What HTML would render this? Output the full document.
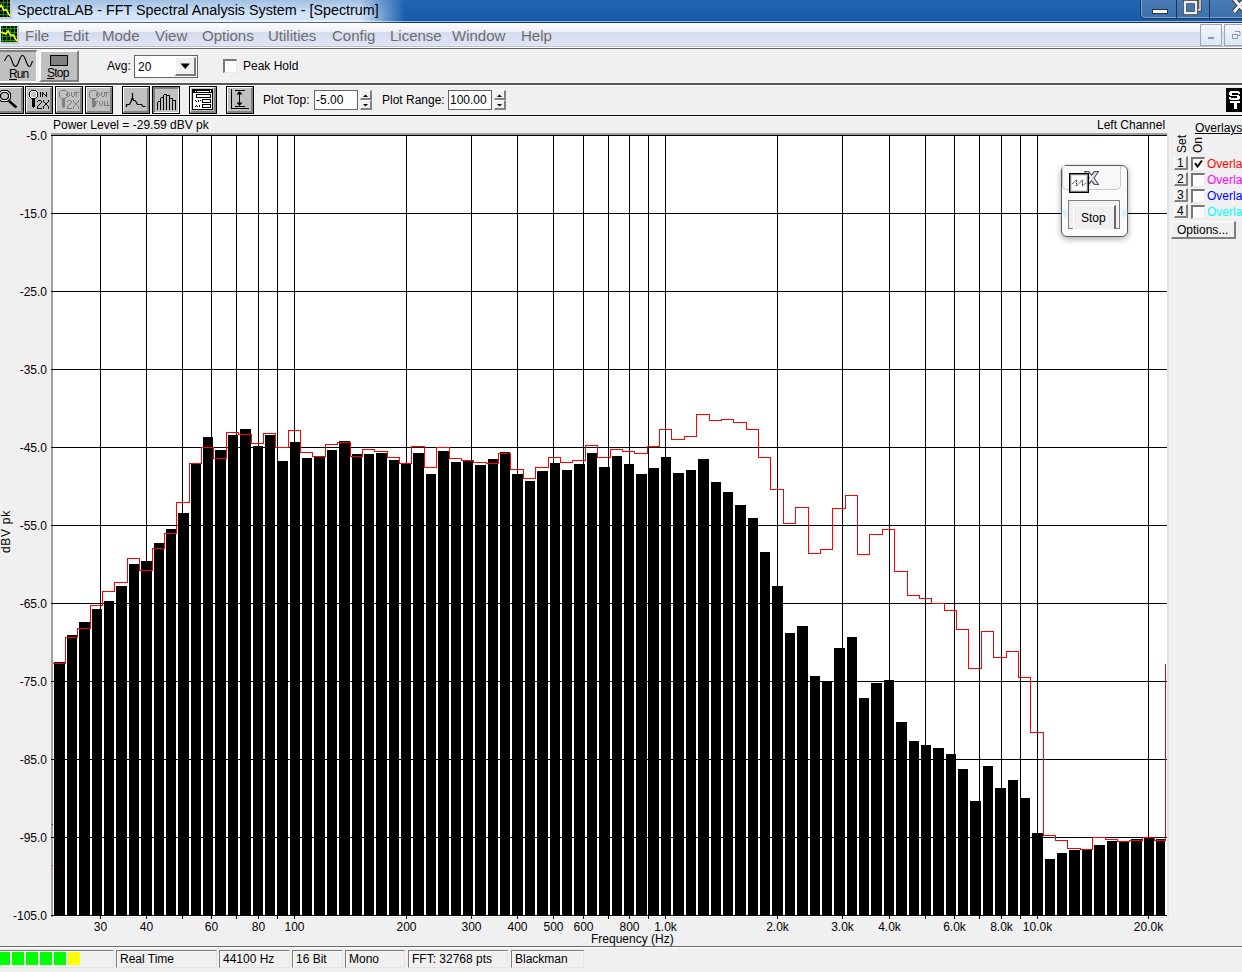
<!DOCTYPE html>
<html><head><meta charset="utf-8"><style>
*{margin:0;padding:0;box-sizing:border-box}
html,body{width:1242px;height:972px;overflow:hidden;background:#f0f0f0;font-family:"Liberation Sans",sans-serif;position:relative}
.a{position:absolute}
.t{position:absolute;white-space:nowrap;line-height:1}
</style></head><body>
<div class="a" style="left:0;top:0;width:1242px;height:20px;background:linear-gradient(#2066b4,#175cab)"></div><div class="a" style="left:0;top:20px;width:1242px;height:1px;background:#0c56a8"></div><div class="a" style="left:0;top:21px;width:1242px;height:1px;background:#9bbde0"></div><div class="a" style="left:0;top:22px;width:1242px;height:1px;background:#1b3050"></div><div class="a" style="left:0;top:0;width:410px;height:22px;-webkit-mask-image:linear-gradient(to right,#000 0,#000 360px,transparent 405px);mask-image:linear-gradient(to right,#000 0,#000 360px,transparent 405px);background:linear-gradient(#a2c0e4 0px,#bcd5ef 8px,#d4e6f8 14px,#cfe3f7 20px,#e6f2fb 20px,#e6f2fb 21px)"></div><div class="a" style="left:0;top:22px;width:410px;height:1px;-webkit-mask-image:linear-gradient(to right,#000 0,#000 360px,transparent 405px);background:#5a6878"></div><div class="t" style="left:17px;top:3px;font-size:14.32px;color:#000;">SpectraLAB - FFT Spectral Analysis System - [Spectrum]</div><svg class="a" style="left:-6px;top:0px" width="18" height="19" viewBox="0 0 18 19"><rect x="0" y="0" width="18" height="19" fill="#c8c8c8"/><rect x="0" y="0" width="16" height="17" fill="#000"/><rect x="1" y="0" width="1" height="17" fill="#00a000"/><rect x="5" y="0" width="1" height="17" fill="#00a000"/><rect x="9" y="0" width="1" height="17" fill="#00a000"/><rect x="13" y="0" width="1" height="17" fill="#00a000"/><rect x="0" y="2" width="16" height="1" fill="#00a000"/><rect x="0" y="6" width="16" height="1" fill="#00a000"/><rect x="0" y="10" width="16" height="1" fill="#00a000"/><rect x="0" y="14" width="16" height="1" fill="#00a000"/><polyline points="0,6.46 4.8,8.5 7.2,5.1 9.6,10.2 12.0,9.350000000000001 16,16.15" stroke="#ff0" stroke-width="1.6" fill="none"/></svg><div class="a" style="left:1140px;top:-2px;width:110px;height:21px;border:1px solid #1d3554;border-radius:0 0 0 5px;background:linear-gradient(#4a7bb5,#3d6fab);box-shadow:inset 0 0 0 1px #7da3cf"></div><div class="a" style="left:1176px;top:0;width:1px;height:18px;background:#1d3554"></div><div class="a" style="left:1209px;top:0;width:1px;height:18px;background:#1d3554"></div><div class="a" style="left:1152px;top:9px;width:16px;height:5px;background:#f4f4f4;border:1px solid #333"></div><svg class="a" style="left:1183px;top:-2px" width="19" height="17"><path d="M5 1h12v11h-3" fill="none" stroke="#333" stroke-width="3"/><path d="M5 1h12v11h-3" fill="none" stroke="#eee" stroke-width="1.5"/><rect x="2" y="4" width="11" height="11" fill="none" stroke="#333" stroke-width="4"/><rect x="2" y="4" width="11" height="11" fill="none" stroke="#eee" stroke-width="2.5"/></svg><svg class="a" style="left:1232px;top:-3px" width="14" height="17"><path d="M2 2L13 15M13 2L2 15" stroke="#333" stroke-width="5"/><path d="M2 2L13 15M13 2L2 15" stroke="#f2f2f2" stroke-width="3"/></svg><div class="a" style="left:0;top:23px;width:1242px;height:23px;background:linear-gradient(#fcfdfe 0px,#eef0f8 9px,#d5dcee 9px,#dfe5f5 23px)"></div><div class="a" style="left:0;top:46px;width:1242px;height:1px;background:#b9c2d6"></div><div class="a" style="left:0;top:47px;width:1242px;height:1px;background:#ffffff"></div><div class="a" style="left:0;top:48px;width:1242px;height:1px;background:#666"></div><svg class="a" style="left:1px;top:26px" width="18" height="18" viewBox="0 0 18 18"><rect x="0" y="0" width="18" height="18" fill="#c8c8c8"/><rect x="0" y="0" width="16" height="16" fill="#000"/><rect x="1" y="0" width="1" height="16" fill="#00a000"/><rect x="5" y="0" width="1" height="16" fill="#00a000"/><rect x="9" y="0" width="1" height="16" fill="#00a000"/><rect x="13" y="0" width="1" height="16" fill="#00a000"/><rect x="0" y="2" width="16" height="1" fill="#00a000"/><rect x="0" y="6" width="16" height="1" fill="#00a000"/><rect x="0" y="10" width="16" height="1" fill="#00a000"/><rect x="0" y="14" width="16" height="1" fill="#00a000"/><polyline points="0,6.08 4.8,8.0 7.2,4.8 9.6,9.6 12.0,8.8 16,15.2" stroke="#ff0" stroke-width="1.6" fill="none"/></svg><div class="t" style="left:25px;top:28px;font-size:15px;color:#6d6d6d;">File</div><div class="t" style="left:63px;top:28px;font-size:15px;color:#6d6d6d;">Edit</div><div class="t" style="left:102px;top:28px;font-size:15px;color:#6d6d6d;">Mode</div><div class="t" style="left:155px;top:28px;font-size:15px;color:#6d6d6d;">View</div><div class="t" style="left:202px;top:28px;font-size:15px;color:#6d6d6d;">Options</div><div class="t" style="left:268px;top:28px;font-size:15px;color:#6d6d6d;">Utilities</div><div class="t" style="left:332px;top:28px;font-size:15px;color:#6d6d6d;">Config</div><div class="t" style="left:390px;top:28px;font-size:15px;color:#6d6d6d;">License</div><div class="t" style="left:452px;top:28px;font-size:15px;color:#6d6d6d;">Window</div><div class="t" style="left:521px;top:28px;font-size:15px;color:#6d6d6d;">Help</div><div class="a" style="left:1200px;top:24px;width:22px;height:22px;border:1px solid #9aa6b8;background:linear-gradient(#f2f6fc,#dce8f6)"></div><div class="a" style="left:1208px;top:37px;width:6px;height:2px;background:#8a94a4"></div><div class="a" style="left:1224px;top:24px;width:22px;height:22px;border:1px solid #9aa6b8;background:linear-gradient(#f2f6fc,#dce8f6)"></div><svg class="a" style="left:1232px;top:31px" width="9" height="9"><path d="M3 .5h5v4h-2M.5 3.5h5v4h-5z" fill="none" stroke="#8a94a4"/></svg>
<!--TOOLBAR-->
<svg class="a" style="left:0;top:0" width="1242" height="972" viewBox="0 0 1242 972" shape-rendering="crispEdges">
<rect x="51" y="133" width="2" height="784" fill="#a0a0a0"/>
<rect x="51" y="133" width="1116" height="2" fill="#a0a0a0"/>
<rect x="53" y="136" width="1114" height="781" fill="#fff"/>
<rect x="1167" y="134" width="2" height="784" fill="#e3e3e3"/>
<rect x="51" y="917" width="1118" height="1" fill="#e3e3e3"/>
<path d="M100.5 135V916 M146.5 135V916 M182.5 135V916 M211.5 135V916 M236.5 135V916 M258.5 135V916 M277.5 135V916 M294.5 135V916 M406.5 135V916 M471.5 135V916 M517.5 135V916 M553.5 135V916 M583.5 135V916 M608.5 135V916 M629.5 135V916 M648.5 135V916 M665.5 135V916 M777.5 135V916 M842.5 135V916 M889.5 135V916 M925.5 135V916 M954.5 135V916 M979.5 135V916 M1001.5 135V916 M1020.5 135V916 M1037.5 135V916 M1148.5 135V916 M51 135.5H1167 M51 213.5H1167 M51 291.5H1167 M51 369.5H1167 M51 447.5H1167 M51 525.5H1167 M51 603.5H1167 M51 681.5H1167 M51 759.5H1167 M51 837.5H1167 M51 915.5H1167" stroke="#000" stroke-width="1" fill="none"/>
<path d="M100.5 916V919 M146.5 916V919 M182.5 916V919 M211.5 916V919 M236.5 916V919 M258.5 916V919 M277.5 916V919 M294.5 916V919 M406.5 916V919 M471.5 916V919 M517.5 916V919 M553.5 916V919 M583.5 916V919 M608.5 916V919 M629.5 916V919 M648.5 916V919 M665.5 916V919 M777.5 916V919 M842.5 916V919 M889.5 916V919 M925.5 916V919 M954.5 916V919 M979.5 916V919 M1001.5 916V919 M1020.5 916V919 M1037.5 916V919 M1148.5 916V919" stroke="#000" stroke-width="1" fill="none"/>
<path d="M54 662H65V915H54Z M67 635H77V915H67Z M79 622H90V915H79Z M92 609H102V915H92Z M104 601H114V915H104Z M116 586H127V915H116Z M129 564H139V915H129Z M141 561H152V915H141Z M154 543H164V915H154Z M166 529H176V915H166Z M178 513H189V915H178Z M191 464H201V915H191Z M203 437H213V915H203Z M215 450H226V915H215Z M228 435H238V915H228Z M240 429H251V915H240Z M253 446H263V915H253Z M265 435H275V915H265Z M277 461H288V915H277Z M290 442H300V915H290Z M302 458H312V915H302Z M314 457H325V915H314Z M327 450H337V915H327Z M339 441H350V915H339Z M352 454H362V915H352Z M364 454H374V915H364Z M376 453H387V915H376Z M389 460H399V915H389Z M401 464H411V915H401Z M413 453H424V915H413Z M426 474H436V915H426Z M438 451H449V915H438Z M451 462H461V915H451Z M463 461H473V915H463Z M475 465H486V915H475Z M488 459H498V915H488Z M500 452H510V915H500Z M512 474H523V915H512Z M525 481H535V915H525Z M537 471H548V915H537Z M550 463H560V915H550Z M562 470H572V915H562Z M574 464H585V915H574Z M587 453H597V915H587Z M599 467H610V915H599Z M612 456H622V915H612Z M624 464H634V915H624Z M636 474H647V915H636Z M649 468H659V915H649Z M661 457H671V915H661Z M673 473H684V915H673Z M686 470H696V915H686Z M698 459H709V915H698Z M711 482H721V915H711Z M723 492H733V915H723Z M735 505H746V915H735Z M748 518H758V915H748Z M760 552H770V915H760Z M772 586H783V915H772Z M785 633H795V915H785Z M797 626H808V915H797Z M810 676H820V915H810Z M822 681H832V915H822Z M834 648H845V915H834Z M847 637H857V915H847Z M859 698H869V915H859Z M871 683H882V915H871Z M884 680H894V915H884Z M896 722H907V915H896Z M909 741H919V915H909Z M921 745H931V915H921Z M933 748H944V915H933Z M946 754H956V915H946Z M958 769H968V915H958Z M970 801H981V915H970Z M983 766H993V915H983Z M995 788H1006V915H995Z M1008 780H1018V915H1008Z M1020 798H1030V915H1020Z M1032 833H1043V915H1032Z M1045 859H1055V915H1045Z M1057 853H1067V915H1057Z M1069 850H1080V915H1069Z M1082 850H1092V915H1082Z M1094 845H1105V915H1094Z M1107 841H1117V915H1107Z M1119 841H1129V915H1119Z M1131 839H1142V915H1131Z M1144 838H1154V915H1144Z M1156 839H1165V915H1156Z" fill="#000"/>
<path d="M53 663.5H65.5V637.5H77.5V628.5H90.5V605.5H102.5V591.5H114.5V582.5H127.5V558.5H139.5V570.5H152.5V548.5H164.5V533.5H176.5V502.5H189.5V463.5H201.5V447.5H213.5V458.5H226.5V432.5H238.5V434.5H251.5V443.5H263.5V433.5H275.5V447.5H288.5V430.5H300.5V452.5H312.5V456.5H325.5V444.5H337.5V442.5H350.5V456.5H362.5V449.5H374.5V451.5H387.5V457.5H399.5V463.5H411.5V446.5H424.5V467.5H436.5V447.5H449.5V458.5H461.5V460.5H473.5V462.5H486.5V463.5H498.5V453.5H510.5V469.5H523.5V478.5H535.5V467.5H548.5V457.5H560.5V462.5H572.5V460.5H585.5V445.5H597.5V457.5H610.5V449.5H622.5V451.5H634.5V453.5H647.5V446.5H659.5V429.5H671.5V439.5H684.5V436.5H696.5V414.5H709.5V420.5H721.5V419.5H733.5V422.5H746.5V429.5H758.5V457.5H770.5V489.5H783.5V523.5H795.5V507.5H808.5V553.5H820.5V549.5H832.5V508.5H845.5V495.5H857.5V554.5H869.5V534.5H882.5V529.5H894.5V571.5H907.5V595.5H919.5V598.5H931.5V603.5H944.5V610.5H956.5V629.5H968.5V668.5H981.5V631.5H993.5V657.5H1006.5V651.5H1018.5V677.5H1030.5V732.5H1043.5V835.5H1055.5V840.5H1067.5V848.5H1080.5V849.5H1092.5V837.5H1105.5V839.5H1117.5V841.5H1129.5V840.5H1142.5V837.5H1154.5V840.5H1165.5V664" stroke="#f00" stroke-width="1" fill="none"/>
<rect x="52" y="824" width="1" height="1" fill="#0000ff"/><rect x="52" y="865" width="1" height="1" fill="#ff0000"/>
</svg>
<div class="a" style="left:-2px;top:50px;width:39px;height:32px;background:#c0c0c0;border-top:2px solid #808080;border-left:2px solid #808080;border-right:1px solid #fff;border-bottom:1px solid #fff"></div><svg class="a" style="left:3px;top:53px" width="32" height="16"><path d="M1.5 8C3 5 4 2.5 5.5 2.5S8 5 9 8S11 13.5 12.5 13.5S15 11 16 8S18 2.5 19.5 2.5S22 5 23 8S25 13.5 26.5 13.5S28.5 10.5 29.5 8" fill="none" stroke="#000" stroke-width="1.1"/></svg><div class="t" style="left:9px;top:68px;font-size:12px;color:#000;letter-spacing:-0.9px"><u>R</u>un</div><div class="a" style="left:39px;top:50px;width:40px;height:32px;background:#c0c0c0;border-top:2px solid #fff;border-left:2px solid #fff;border-right:2px solid #808080;border-bottom:2px solid #808080"></div><div class="a" style="left:50px;top:55px;width:18px;height:11px;background:#808080;border:1px solid #000"></div><div class="t" style="left:47px;top:67px;font-size:12px;color:#000;letter-spacing:-0.8px"><u>S</u>top</div><div class="a" style="left:0;top:82px;width:1242px;height:1px;background:#f8f8f8"></div><div class="a" style="left:0;top:83px;width:1242px;height:2px;background:#555"></div><div class="a" style="left:0;top:85px;width:1242px;height:1px;background:#fff"></div><div class="t" style="left:107px;top:60px;font-size:12px;color:#000;">Avg:</div><div class="a" style="left:134px;top:55px;width:64px;height:23px;border:1px solid #646464;background:#fff"></div><div class="t" style="left:138px;top:61px;font-size:12px;color:#000;">20</div><div class="a" style="left:175px;top:57px;width:21px;height:19px;background:#f0f0f0;border-top:1px solid #fff;border-left:1px solid #fff;border-right:2px solid #7a7a7a;border-bottom:2px solid #7a7a7a"></div><svg class="a" style="left:180px;top:63px" width="11" height="7"><path d="M0.5 0.5H10L5.25 6Z" fill="#000"/></svg><div class="a" style="left:223px;top:59px;width:14px;height:14px;background:#fff;border-top:2px solid #777;border-left:2px solid #777;border-right:1px solid #e8e8e8;border-bottom:1px solid #e8e8e8"></div><div class="t" style="left:243px;top:60px;font-size:12px;color:#000;">Peak Hold</div><div class="a" style="left:-4px;top:86px;width:28px;height:28px;border:1px solid #000;background:#c0c0c0"><div class="a" style="left:0;top:0;width:26px;height:26px;border-top:1px solid #fff;border-left:1px solid #fff;border-right:2px solid #808080;border-bottom:2px solid #808080"></div></div><div class="a" style="left:25px;top:86px;width:28px;height:28px;border:1px solid #000;background:#c0c0c0"><div class="a" style="left:0;top:0;width:26px;height:26px;border-top:1px solid #fff;border-left:1px solid #fff;border-right:2px solid #808080;border-bottom:2px solid #808080"></div></div><div class="a" style="left:55px;top:86px;width:28px;height:28px;border:1px solid #000;background:#c0c0c0"><div class="a" style="left:0;top:0;width:26px;height:26px;border-top:1px solid #fff;border-left:1px solid #fff;border-right:2px solid #808080;border-bottom:2px solid #808080"></div></div><div class="a" style="left:85px;top:86px;width:28px;height:28px;border:1px solid #000;background:#c0c0c0"><div class="a" style="left:0;top:0;width:26px;height:26px;border-top:1px solid #fff;border-left:1px solid #fff;border-right:2px solid #808080;border-bottom:2px solid #808080"></div></div><div class="a" style="left:122px;top:86px;width:28px;height:28px;border:1px solid #000;background:#c0c0c0"><div class="a" style="left:0;top:0;width:26px;height:26px;border-top:1px solid #fff;border-left:1px solid #fff;border-right:2px solid #808080;border-bottom:2px solid #808080"></div></div><div class="a" style="left:152px;top:86px;width:28px;height:28px;border:1px solid #000;background:#c0c0c0"><div class="a" style="left:0;top:0;width:26px;height:26px;border-top:2px solid #808080;border-left:2px solid #808080;border-right:1px solid #fff;border-bottom:1px solid #fff"></div></div><div class="a" style="left:189px;top:86px;width:28px;height:28px;border:1px solid #000;background:#c0c0c0"><div class="a" style="left:0;top:0;width:26px;height:26px;border-top:1px solid #fff;border-left:1px solid #fff;border-right:2px solid #808080;border-bottom:2px solid #808080"></div></div><div class="a" style="left:226px;top:86px;width:28px;height:28px;border:1px solid #000;background:#c0c0c0"><div class="a" style="left:0;top:0;width:26px;height:26px;border-top:1px solid #fff;border-left:1px solid #fff;border-right:2px solid #808080;border-bottom:2px solid #808080"></div></div><div class="a" style="left:0;top:114px;width:1242px;height:1px;background:#fff"></div><div class="a" style="left:0;top:115px;width:1242px;height:1px;background:#000"></div><div class="a" style="left:0;top:116px;width:1242px;height:1px;background:#fff"></div><svg class="a" style="left:0;top:0" width="260" height="120" shape-rendering="crispEdges"><g shape-rendering="geometricPrecision"><path d="M9 101L16.5 107.5" stroke="#000" stroke-width="2.4"/><polygon points="1.5,90.5 7.5,90.5 10.5,93.5 10.5,98.5 7.5,101.5 1.5,101.5 -1.5,98.5 -1.5,93.5" fill="#fff" stroke="#000" stroke-width="1.1"/><polygon points="2.5,92.5 6.5,92.5 8.5,94.5 8.5,97.5 6.5,99.5 2.5,99.5 0.5,97.5 0.5,94.5" fill="#c0c0c0" stroke="#000" stroke-width="1.1"/></g><path d="M31 91h5v1h-5zM30 92h1v1h-1zM36 92h1v1h-1zM30 93h1v1h-1zM36 93h1v1h-1zM30 94h1v1h-1zM36 94h1v1h-1zM30 95h1v1h-1zM36 95h1v1h-1zM30 96h1v1h-1zM36 96h1v1h-1zM31 97h5v1h-5z" fill="#fff"/><path d="M31 90h5v1h-5zM30 91h1v1h-1zM36 91h1v1h-1zM29 92h1v1h-1zM37 92h1v1h-1zM29 93h1v1h-1zM37 93h1v1h-1zM29 94h1v1h-1zM37 94h1v1h-1zM29 95h1v1h-1zM37 95h1v1h-1zM29 96h1v1h-1zM37 96h1v1h-1zM30 97h1v1h-1zM36 97h1v1h-1zM31 98h5v1h-5z" fill="#000"/><path d="M32 99h3v1h-3zM32 100h3v1h-3zM32 101h3v1h-3zM32 102h3v1h-3zM32 103h3v1h-3zM32 104h3v1h-3zM32 105h3v1h-3zM32 106h3v1h-3zM33 107h1v1h-1z" fill="#000"/><path d="M40 92h1v1h-1zM42 92h1v1h-1zM46 92h1v1h-1zM40 93h1v1h-1zM42 93h2v1h-2zM46 93h1v1h-1zM40 94h1v1h-1zM42 94h1v1h-1zM44 94h1v1h-1zM46 94h1v1h-1zM40 95h1v1h-1zM42 95h1v1h-1zM45 95h2v1h-2zM40 96h1v1h-1zM42 96h1v1h-1zM46 96h1v1h-1z" fill="#000"/><path d="M38 100h3v1h-3zM43 100h1v1h-1zM48 100h1v1h-1zM37 101h1v1h-1zM41 101h1v1h-1zM43 101h1v1h-1zM48 101h1v1h-1zM41 102h1v1h-1zM44 102h1v1h-1zM47 102h1v1h-1zM40 103h1v1h-1zM45 103h2v1h-2zM39 104h1v1h-1zM45 104h2v1h-2zM38 105h1v1h-1zM44 105h1v1h-1zM47 105h1v1h-1zM37 106h1v1h-1zM43 106h1v1h-1zM48 106h1v1h-1zM37 107h1v1h-1zM43 107h1v1h-1zM48 107h1v1h-1zM37 108h5v1h-5zM43 108h1v1h-1zM48 108h1v1h-1z" fill="#000"/><path d="M61 90h5v1h-5zM60 91h1v1h-1zM66 91h1v1h-1zM59 92h1v1h-1zM67 92h1v1h-1zM59 93h1v1h-1zM67 93h1v1h-1zM59 94h1v1h-1zM67 94h1v1h-1zM59 95h1v1h-1zM67 95h1v1h-1zM59 96h1v1h-1zM67 96h1v1h-1zM60 97h1v1h-1zM66 97h1v1h-1zM61 98h5v1h-5z" fill="#808080"/><path d="M62 99h3v1h-3zM62 100h3v1h-3zM62 101h3v1h-3zM62 102h3v1h-3zM62 103h3v1h-3zM62 104h3v1h-3zM62 105h3v1h-3zM62 106h3v1h-3zM63 107h1v1h-1z" fill="#808080"/><path d="M67 92h2v1h-2zM71 92h1v1h-1zM74 92h1v1h-1zM66 93h1v1h-1zM69 93h1v1h-1zM71 93h1v1h-1zM74 93h1v1h-1zM66 94h1v1h-1zM69 94h1v1h-1zM71 94h1v1h-1zM74 94h1v1h-1zM66 95h1v1h-1zM69 95h1v1h-1zM71 95h1v1h-1zM74 95h1v1h-1zM67 96h2v1h-2zM72 96h2v1h-2z" fill="#808080"/><path d="M74 92h5v1h-5zM76 93h1v1h-1zM76 94h1v1h-1zM76 95h1v1h-1zM76 96h1v1h-1z" fill="#808080"/><path d="M68 100h3v1h-3zM73 100h1v1h-1zM78 100h1v1h-1zM67 101h1v1h-1zM71 101h1v1h-1zM73 101h1v1h-1zM78 101h1v1h-1zM71 102h1v1h-1zM74 102h1v1h-1zM77 102h1v1h-1zM70 103h1v1h-1zM75 103h2v1h-2zM69 104h1v1h-1zM75 104h2v1h-2zM68 105h1v1h-1zM74 105h1v1h-1zM77 105h1v1h-1zM67 106h1v1h-1zM73 106h1v1h-1zM78 106h1v1h-1zM67 107h1v1h-1zM73 107h1v1h-1zM78 107h1v1h-1zM67 108h5v1h-5zM73 108h1v1h-1zM78 108h1v1h-1z" fill="#808080"/><path d="M91 90h5v1h-5zM90 91h1v1h-1zM96 91h1v1h-1zM89 92h1v1h-1zM97 92h1v1h-1zM89 93h1v1h-1zM97 93h1v1h-1zM89 94h1v1h-1zM97 94h1v1h-1zM89 95h1v1h-1zM97 95h1v1h-1zM89 96h1v1h-1zM97 96h1v1h-1zM90 97h1v1h-1zM96 97h1v1h-1zM91 98h5v1h-5z" fill="#808080"/><path d="M92 99h3v1h-3zM92 100h3v1h-3zM92 101h3v1h-3zM92 102h3v1h-3zM92 103h3v1h-3zM92 104h3v1h-3zM92 105h3v1h-3zM92 106h3v1h-3zM93 107h1v1h-1z" fill="#808080"/><path d="M97 92h2v1h-2zM101 92h1v1h-1zM104 92h1v1h-1zM96 93h1v1h-1zM99 93h1v1h-1zM101 93h1v1h-1zM104 93h1v1h-1zM96 94h1v1h-1zM99 94h1v1h-1zM101 94h1v1h-1zM104 94h1v1h-1zM96 95h1v1h-1zM99 95h1v1h-1zM101 95h1v1h-1zM104 95h1v1h-1zM97 96h2v1h-2zM102 96h2v1h-2z" fill="#808080"/><path d="M104 92h5v1h-5zM106 93h1v1h-1zM106 94h1v1h-1zM106 95h1v1h-1zM106 96h1v1h-1z" fill="#808080"/><path d="M95 101h3v1h-3zM99 101h1v1h-1zM102 101h1v1h-1zM104 101h1v1h-1zM107 101h1v1h-1zM95 102h1v1h-1zM99 102h1v1h-1zM102 102h1v1h-1zM104 102h1v1h-1zM107 102h1v1h-1zM95 103h2v1h-2zM99 103h1v1h-1zM102 103h1v1h-1zM104 103h1v1h-1zM107 103h1v1h-1zM95 104h1v1h-1zM99 104h1v1h-1zM102 104h1v1h-1zM104 104h1v1h-1zM107 104h1v1h-1zM95 105h1v1h-1zM100 105h2v1h-2zM104 105h6v1h-6z" fill="#808080"/><path d="M126.5 107V104.5H129.5L130.5 102.5L131.5 100.5L132.5 97V93M132.5 97L133.5 100.5H135L136.5 102.5L137.5 104.5H141.5L143 106.5H145.5" fill="none" stroke="#000" stroke-width="1.2" shape-rendering="geometricPrecision"/><path d="M157.5 110V101.5M160.5 110V97.5M163.5 110V94.5M166.5 110V94.5M169.5 110V95.5M172.5 110V98.5M175.5 110V100.5M157.5 101.5H160.5M160.5 97.5H163.5M163.5 94.5H166.5M166.5 95.5H169.5M169.5 98.5H172.5M172.5 100.5H175.5" fill="none" stroke="#000" stroke-width="1"/><rect x="192" y="89" width="21" height="21" fill="#000"/><rect x="193" y="93" width="19" height="16" fill="#fff"/><path d="M195 91h1v1h-1zM197 91h12v1h-12zM210 90h1v2h-1z" fill="#fff"/><path d="M196.5 94.5h14v3h-14zM202.5 99.5h8v3h-8zM202.5 104.5h8v3h-8z" fill="none" stroke="#000"/><path d="M195 100h1v1h-1zM196 101h1v1h-1zM198 100h1v2h-1zM200 100h1v1h-1zM195 106h1v1h-1zM196 105h1v1h-1zM197 106h1v1h-1zM199 105h1v2h-1z" fill="#000"/><path d="M231 89h1v19h17v1h-18z" fill="#000"/><path d="M235 90h10v1h-10zM235 106h10v1h-10zM239 92h1v13h-1z" fill="#000"/><path d="M236.5 94.5L239.5 91L242.5 94.5ZM236.5 102.5L239.5 106L242.5 102.5Z" fill="#000" shape-rendering="geometricPrecision"/></svg><div class="t" style="left:263px;top:94px;font-size:12px;color:#000;">Plot Top:</div><div class="a" style="left:314px;top:90px;width:44px;height:20px;border:1px solid #646464;background:#fff"></div><div class="t" style="left:316px;top:94px;font-size:12px;color:#000;">-5.00</div><div class="a" style="left:360px;top:90px;width:12px;height:10px;background:#f0f0f0;border-top:1px solid #fff;border-left:1px solid #fff;border-right:2px solid #808080;border-bottom:2px solid #808080"></div><div class="a" style="left:360px;top:100px;width:12px;height:10px;background:#f0f0f0;border-top:1px solid #fff;border-left:1px solid #fff;border-right:2px solid #808080;border-bottom:2px solid #808080"></div><svg class="a" style="left:363px;top:94px" width="6" height="14"><path d="M0 3H5L2.5 0.5Z" fill="#000"/><path d="M0 10H5L2.5 12.5Z" fill="#000"/></svg><div class="t" style="left:382px;top:94px;font-size:12px;color:#000;">Plot Range:</div><div class="a" style="left:448px;top:90px;width:44px;height:20px;border:1px solid #646464;background:#fff"></div><div class="t" style="left:450px;top:94px;font-size:12px;color:#000;">100.00</div><div class="a" style="left:494px;top:90px;width:12px;height:10px;background:#f0f0f0;border-top:1px solid #fff;border-left:1px solid #fff;border-right:2px solid #808080;border-bottom:2px solid #808080"></div><div class="a" style="left:494px;top:100px;width:12px;height:10px;background:#f0f0f0;border-top:1px solid #fff;border-left:1px solid #fff;border-right:2px solid #808080;border-bottom:2px solid #808080"></div><svg class="a" style="left:497px;top:94px" width="6" height="14"><path d="M0 3H5L2.5 0.5Z" fill="#000"/><path d="M0 10H5L2.5 12.5Z" fill="#000"/></svg><div class="a" style="left:1226px;top:88px;width:16px;height:24px;background:#000"></div><svg class="a" style="left:1226px;top:88px" width="16" height="24" shape-rendering="crispEdges"><path d="M5 3h8v1h1v2h-2v-1h-6v2h7v1h1v3h-1v1h-9v-1h-1v-2h2v1h6v-2h-7v-1h-1v-3h1v-1h1z" fill="#fff"/><path d="M4 13h10v2h-3.5v6h-3v-6h-3.5z" fill="#fff"/></svg><div class="t" style="left:53px;top:119px;font-size:12px;color:#000;">Power Level = -29.59 dBV pk</div><div class="t" style="left:1097px;top:119px;font-size:12px;color:#000;">Left Channel</div><div class="t" style="left:0;width:47px;text-align:right;top:130px;font-size:12px">-5.0</div><div class="t" style="left:0;width:47px;text-align:right;top:208px;font-size:12px">-15.0</div><div class="t" style="left:0;width:47px;text-align:right;top:286px;font-size:12px">-25.0</div><div class="t" style="left:0;width:47px;text-align:right;top:364px;font-size:12px">-35.0</div><div class="t" style="left:0;width:47px;text-align:right;top:442px;font-size:12px">-45.0</div><div class="t" style="left:0;width:47px;text-align:right;top:520px;font-size:12px">-55.0</div><div class="t" style="left:0;width:47px;text-align:right;top:598px;font-size:12px">-65.0</div><div class="t" style="left:0;width:47px;text-align:right;top:676px;font-size:12px">-75.0</div><div class="t" style="left:0;width:47px;text-align:right;top:754px;font-size:12px">-85.0</div><div class="t" style="left:0;width:47px;text-align:right;top:832px;font-size:12px">-95.0</div><div class="t" style="left:0;width:47px;text-align:right;top:910px;font-size:12px">-105.0</div><div class="t" style="left:0px;top:553px;font-size:12px;transform:rotate(-90deg);transform-origin:0 0;letter-spacing:0.7px">dBV pk</div><div class="t" style="left:70px;width:61px;text-align:center;top:921px;font-size:12px">30</div><div class="t" style="left:116px;width:61px;text-align:center;top:921px;font-size:12px">40</div><div class="t" style="left:181px;width:61px;text-align:center;top:921px;font-size:12px">60</div><div class="t" style="left:228px;width:61px;text-align:center;top:921px;font-size:12px">80</div><div class="t" style="left:264px;width:61px;text-align:center;top:921px;font-size:12px">100</div><div class="t" style="left:376px;width:61px;text-align:center;top:921px;font-size:12px">200</div><div class="t" style="left:441px;width:61px;text-align:center;top:921px;font-size:12px">300</div><div class="t" style="left:487px;width:61px;text-align:center;top:921px;font-size:12px">400</div><div class="t" style="left:523px;width:61px;text-align:center;top:921px;font-size:12px">500</div><div class="t" style="left:553px;width:61px;text-align:center;top:921px;font-size:12px">600</div><div class="t" style="left:599px;width:61px;text-align:center;top:921px;font-size:12px">800</div><div class="t" style="left:635px;width:61px;text-align:center;top:921px;font-size:12px">1.0k</div><div class="t" style="left:747px;width:61px;text-align:center;top:921px;font-size:12px">2.0k</div><div class="t" style="left:812px;width:61px;text-align:center;top:921px;font-size:12px">3.0k</div><div class="t" style="left:859px;width:61px;text-align:center;top:921px;font-size:12px">4.0k</div><div class="t" style="left:924px;width:61px;text-align:center;top:921px;font-size:12px">6.0k</div><div class="t" style="left:971px;width:61px;text-align:center;top:921px;font-size:12px">8.0k</div><div class="t" style="left:1007px;width:61px;text-align:center;top:921px;font-size:12px">10.0k</div><div class="t" style="left:1118px;width:61px;text-align:center;top:921px;font-size:12px">20.0k</div><div class="t" style="left:591px;top:933px;font-size:12px;color:#000;">Frequency (Hz)</div><div class="t" style="left:1195px;top:122px;font-size:12px;text-decoration:underline">Overlays</div><div class="t" style="left:1176px;top:153px;font-size:12px;transform:rotate(-90deg);transform-origin:0 0">Set</div><div class="t" style="left:1192px;top:153px;font-size:12px;transform:rotate(-90deg);transform-origin:0 0">On</div><div class="a" style="left:1174px;top:156px;width:14px;height:14px;background:#f0f0f0;border-top:1px solid #fff;border-left:1px solid #fff;border-right:2px solid #808080;border-bottom:2px solid #808080"></div><div class="t" style="left:1177px;top:157px;font-size:12px;color:#000;">1</div><div class="a" style="left:1191px;top:157px;width:14px;height:14px;background:#fff;border-top:2px solid #777;border-left:2px solid #777;border-right:1px solid #e8e8e8;border-bottom:1px solid #e8e8e8"></div><div class="t" style="left:1207px;top:158px;font-size:12px;color:#ff0000;">Overlay</div><div class="a" style="left:1174px;top:172px;width:14px;height:14px;background:#f0f0f0;border-top:1px solid #fff;border-left:1px solid #fff;border-right:2px solid #808080;border-bottom:2px solid #808080"></div><div class="t" style="left:1177px;top:173px;font-size:12px;color:#000;">2</div><div class="a" style="left:1191px;top:173px;width:14px;height:14px;background:#fff;border-top:2px solid #777;border-left:2px solid #777;border-right:1px solid #e8e8e8;border-bottom:1px solid #e8e8e8"></div><div class="t" style="left:1207px;top:174px;font-size:12px;color:#ff00ff;">Overlay</div><div class="a" style="left:1174px;top:188px;width:14px;height:14px;background:#f0f0f0;border-top:1px solid #fff;border-left:1px solid #fff;border-right:2px solid #808080;border-bottom:2px solid #808080"></div><div class="t" style="left:1177px;top:189px;font-size:12px;color:#000;">3</div><div class="a" style="left:1191px;top:189px;width:14px;height:14px;background:#fff;border-top:2px solid #777;border-left:2px solid #777;border-right:1px solid #e8e8e8;border-bottom:1px solid #e8e8e8"></div><div class="t" style="left:1207px;top:190px;font-size:12px;color:#0000ff;">Overlay</div><div class="a" style="left:1174px;top:204px;width:14px;height:14px;background:#f0f0f0;border-top:1px solid #fff;border-left:1px solid #fff;border-right:2px solid #808080;border-bottom:2px solid #808080"></div><div class="t" style="left:1177px;top:205px;font-size:12px;color:#000;">4</div><div class="a" style="left:1191px;top:205px;width:14px;height:14px;background:#fff;border-top:2px solid #777;border-left:2px solid #777;border-right:1px solid #e8e8e8;border-bottom:1px solid #e8e8e8"></div><div class="t" style="left:1207px;top:206px;font-size:12px;color:#00ffff;">Overlay</div><svg class="a" style="left:1193px;top:159px" width="10" height="10"><path d="M2 4L4.5 7.5L9 1.5" fill="none" stroke="#000" stroke-width="2"/></svg><div class="a" style="left:1171px;top:221px;width:65px;height:18px;background:#f0f0f0;border-top:1px solid #fff;border-left:1px solid #fff;border-right:2px solid #808080;border-bottom:2px solid #808080"></div><div class="t" style="left:1177px;top:224px;font-size:12px;color:#000;">Options...</div><div class="a" style="left:1061px;top:165px;width:67px;height:72px;border:1px solid #5a5a5a;border-radius:6px;background:#fbfbfb;box-shadow:0 2px 6px rgba(0,0,0,.35)"></div><div class="a" style="left:1062px;top:166px;width:59px;height:24px;border:1px solid #c8c8c8;border-top:none;border-radius:0 0 5px 5px;background:#f8f8f8"></div><svg class="a" style="left:1083px;top:170px" width="17" height="17"><polygon points="1.5,1.5 5.5,1.5 8.5,5.2 11.5,1.5 15.5,1.5 11,8 15.5,14.5 11.5,14.5 8.5,10.8 5.5,14.5 1.5,14.5 6,8" fill="#e6e6e6" stroke="#4a5468" stroke-width="1.2" stroke-linejoin="round"/></svg><div class="a" style="left:1069px;top:173px;width:20px;height:20px;border:1px solid #000;box-shadow:inset 0 0 0 1px #777, inset 0 0 0 2px #e0e0e0;background:#fff"></div><svg class="a" style="left:1071px;top:175px" width="16" height="16"><path d="M1.3 9L5.4 4.8V11.1L11.5 4.8V11.1L15 7.7" fill="none" stroke="#000" stroke-width="0.9" stroke-dasharray="1.2 0.6"/></svg><div class="a" style="left:1061px;top:206px;width:8px;height:14px;background:radial-gradient(ellipse at 50% 50%,rgba(200,236,248,.9),rgba(230,246,252,0) 70%)"></div><div class="a" style="left:1120px;top:206px;width:8px;height:14px;background:radial-gradient(ellipse at 50% 50%,rgba(200,236,248,.9),rgba(230,246,252,0) 70%)"></div><div class="a" style="left:1068px;top:200px;width:52px;height:29px;border:1px solid #808080;background:#f0f0f0"></div><div class="a" style="left:1073px;top:205px;width:43px;height:24px;border-top:1px solid #fff;border-left:1px solid #fff;border-right:2px solid #666;background:#f0f0f0"></div><div class="t" style="left:1081px;top:212px;font-size:12px;color:#000;">Stop</div><div class="a" style="left:0;top:946px;width:1242px;height:1px;background:#696969"></div><div class="a" style="left:0;top:947px;width:1242px;height:1px;background:#fff"></div><div class="a" style="left:-2px;top:950px;width:116px;height:18px;border-top:1px solid #7a7a7a;border-left:1px solid #7a7a7a;border-right:1px solid #e4e4e4;border-bottom:1px solid #e4e4e4;box-shadow:inset 1px 1px 0 #fafafa"></div><div class="a" style="left:-2px;top:952px;width:12px;height:13px;background:#00ff00"></div><div class="a" style="left:12px;top:952px;width:12px;height:13px;background:#00ff00"></div><div class="a" style="left:26px;top:952px;width:12px;height:13px;background:#00ff00"></div><div class="a" style="left:40px;top:952px;width:12px;height:13px;background:#00ff00"></div><div class="a" style="left:54px;top:952px;width:12px;height:13px;background:#00ff00"></div><div class="a" style="left:68px;top:952px;width:12px;height:13px;background:#ffff00"></div><div class="a" style="left:116px;top:950px;width:101px;height:18px;border-top:1px solid #7a7a7a;border-left:1px solid #7a7a7a;border-right:1px solid #e4e4e4;border-bottom:1px solid #e4e4e4;box-shadow:inset 1px 1px 0 #fafafa"></div><div class="t" style="left:120px;top:953px;font-size:12px;color:#000;">Real Time</div><div class="a" style="left:219px;top:950px;width:71px;height:18px;border-top:1px solid #7a7a7a;border-left:1px solid #7a7a7a;border-right:1px solid #e4e4e4;border-bottom:1px solid #e4e4e4;box-shadow:inset 1px 1px 0 #fafafa"></div><div class="t" style="left:223px;top:953px;font-size:12px;color:#000;">44100 Hz</div><div class="a" style="left:292px;top:950px;width:51px;height:18px;border-top:1px solid #7a7a7a;border-left:1px solid #7a7a7a;border-right:1px solid #e4e4e4;border-bottom:1px solid #e4e4e4;box-shadow:inset 1px 1px 0 #fafafa"></div><div class="t" style="left:296px;top:953px;font-size:12px;color:#000;">16 Bit</div><div class="a" style="left:345px;top:950px;width:60px;height:18px;border-top:1px solid #7a7a7a;border-left:1px solid #7a7a7a;border-right:1px solid #e4e4e4;border-bottom:1px solid #e4e4e4;box-shadow:inset 1px 1px 0 #fafafa"></div><div class="t" style="left:349px;top:953px;font-size:12px;color:#000;">Mono</div><div class="a" style="left:408px;top:950px;width:100px;height:18px;border-top:1px solid #7a7a7a;border-left:1px solid #7a7a7a;border-right:1px solid #e4e4e4;border-bottom:1px solid #e4e4e4;box-shadow:inset 1px 1px 0 #fafafa"></div><div class="t" style="left:412px;top:953px;font-size:12px;color:#000;">FFT: 32768 pts</div><div class="a" style="left:511px;top:950px;width:73px;height:18px;border-top:1px solid #7a7a7a;border-left:1px solid #7a7a7a;border-right:1px solid #e4e4e4;border-bottom:1px solid #e4e4e4;box-shadow:inset 1px 1px 0 #fafafa"></div><div class="t" style="left:515px;top:953px;font-size:12px;color:#000;">Blackman</div>
</body></html>
